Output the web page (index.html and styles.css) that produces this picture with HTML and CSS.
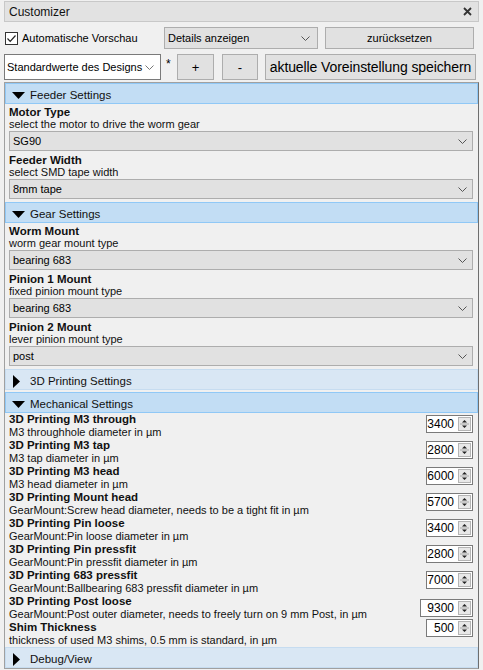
FILE: index.html
```html
<!DOCTYPE html>
<html>
<head>
<meta charset="utf-8">
<link rel="stylesheet" href="styles.css">
</head>
<body>
<div class="titlebar">
  <span class="title">Customizer</span>
  <svg class="close" width="9" height="9" viewBox="0 0 9 9"><path d="M1 1L8 8M8 1L1 8" stroke="#333" stroke-width="1.8"/></svg>
</div>

<div class="row1">
  <label class="chk">
    <span class="box"><svg width="11" height="11" viewBox="0 0 11 11"><path d="M1.5 5.5L4.2 8.3L9.5 2.5" fill="none" stroke="#222" stroke-width="1.2"/></svg></span>
    <span>Automatische Vorschau</span>
  </label>
  <div class="combo grey details"><span>Details anzeigen</span><svg class="chev" width="9" height="5" viewBox="0 0 9 5"><path d="M0.5 0.5L4.5 4.5L8.5 0.5" fill="none" stroke="#555"/></svg></div>
  <div class="btn reset">zurücksetzen</div>
</div>

<div class="row2">
  <div class="combo white preset"><span>Standardwerte des Designs</span><svg class="chev" width="9" height="5" viewBox="0 0 9 5"><path d="M0.5 0.5L4.5 4.5L8.5 0.5" fill="none" stroke="#777"/></svg></div>
  <span class="star">*</span>
  <div class="btn sq plus">+</div>
  <div class="btn sq minus">-</div>
  <div class="btn big">aktuelle Voreinstellung speichern</div>
</div>

<div class="panel">
  <div class="ghead open"><svg class="tri" width="13" height="7" viewBox="0 0 13 7"><path d="M0 0H13L6.5 7Z" fill="#000"/></svg><span>Feeder Settings</span></div>
  <div class="params">
    <div class="pt">Motor Type</div>
    <div class="pd">select the motor to drive the worm gear</div>
    <div class="sel"><span>SG90</span><svg class="chev" width="9" height="5" viewBox="0 0 9 5"><path d="M0.5 0.5L4.5 4.5L8.5 0.5" fill="none" stroke="#555"/></svg></div>
    <div class="pt">Feeder Width</div>
    <div class="pd">select SMD tape width</div>
    <div class="sel"><span>8mm tape</span><svg class="chev" width="9" height="5" viewBox="0 0 9 5"><path d="M0.5 0.5L4.5 4.5L8.5 0.5" fill="none" stroke="#555"/></svg></div>
  </div>

  <div class="ghead open"><svg class="tri" width="13" height="7" viewBox="0 0 13 7"><path d="M0 0H13L6.5 7Z" fill="#000"/></svg><span>Gear Settings</span></div>
  <div class="params">
    <div class="pt">Worm Mount</div>
    <div class="pd">worm gear mount type</div>
    <div class="sel"><span>bearing 683</span><svg class="chev" width="9" height="5" viewBox="0 0 9 5"><path d="M0.5 0.5L4.5 4.5L8.5 0.5" fill="none" stroke="#555"/></svg></div>
    <div class="pt">Pinion 1 Mount</div>
    <div class="pd">fixed pinion mount type</div>
    <div class="sel"><span>bearing 683</span><svg class="chev" width="9" height="5" viewBox="0 0 9 5"><path d="M0.5 0.5L4.5 4.5L8.5 0.5" fill="none" stroke="#555"/></svg></div>
    <div class="pt">Pinion 2 Mount</div>
    <div class="pd">lever pinion mount type</div>
    <div class="sel"><span>post</span><svg class="chev" width="9" height="5" viewBox="0 0 9 5"><path d="M0.5 0.5L4.5 4.5L8.5 0.5" fill="none" stroke="#555"/></svg></div>
  </div>

  <div class="ghead closed"><svg class="tri r" width="7" height="13" viewBox="0 0 7 13"><path d="M0 0V13L7 6.5Z" fill="#000"/></svg><span>3D Printing Settings</span></div>

  <div class="ghead open"><svg class="tri" width="13" height="7" viewBox="0 0 13 7"><path d="M0 0H13L6.5 7Z" fill="#000"/></svg><span>Mechanical Settings</span></div>
  <div class="params mech">
    <div class="item">
      <div class="itxt"><div class="pt">3D Printing M3 through</div><div class="pd">M3 throughhole diameter in µm</div></div>
      <div class="spin"><span class="val">3400</span><span class="arrows"><svg width="11" height="14" viewBox="0 0 11 14"><path d="M3 5.5H8L5.5 3Z" fill="#222"/><path d="M1 7H10" stroke="#a8a8a8"/><path d="M3 8.5H8L5.5 11Z" fill="#222"/></svg></span></div>
    </div>
    <div class="item">
      <div class="itxt"><div class="pt">3D Printing M3 tap</div><div class="pd">M3 tap diameter in µm</div></div>
      <div class="spin"><span class="val">2800</span><span class="arrows"><svg width="11" height="14" viewBox="0 0 11 14"><path d="M3 5.5H8L5.5 3Z" fill="#222"/><path d="M1 7H10" stroke="#a8a8a8"/><path d="M3 8.5H8L5.5 11Z" fill="#222"/></svg></span></div>
    </div>
    <div class="item">
      <div class="itxt"><div class="pt">3D Printing M3 head</div><div class="pd">M3 head diameter in µm</div></div>
      <div class="spin"><span class="val">6000</span><span class="arrows"><svg width="11" height="14" viewBox="0 0 11 14"><path d="M3 5.5H8L5.5 3Z" fill="#222"/><path d="M1 7H10" stroke="#a8a8a8"/><path d="M3 8.5H8L5.5 11Z" fill="#222"/></svg></span></div>
    </div>
    <div class="item">
      <div class="itxt"><div class="pt">3D Printing Mount head</div><div class="pd">GearMount:Screw head diameter, needs to be a tight fit in µm</div></div>
      <div class="spin"><span class="val">5700</span><span class="arrows"><svg width="11" height="14" viewBox="0 0 11 14"><path d="M3 5.5H8L5.5 3Z" fill="#222"/><path d="M1 7H10" stroke="#a8a8a8"/><path d="M3 8.5H8L5.5 11Z" fill="#222"/></svg></span></div>
    </div>
    <div class="item">
      <div class="itxt"><div class="pt">3D Printing Pin loose</div><div class="pd">GearMount:Pin loose diameter in µm</div></div>
      <div class="spin"><span class="val">3400</span><span class="arrows"><svg width="11" height="14" viewBox="0 0 11 14"><path d="M3 5.5H8L5.5 3Z" fill="#222"/><path d="M1 7H10" stroke="#a8a8a8"/><path d="M3 8.5H8L5.5 11Z" fill="#222"/></svg></span></div>
    </div>
    <div class="item">
      <div class="itxt"><div class="pt">3D Printing Pin pressfit</div><div class="pd">GearMount:Pin pressfit diameter in µm</div></div>
      <div class="spin"><span class="val">2800</span><span class="arrows"><svg width="11" height="14" viewBox="0 0 11 14"><path d="M3 5.5H8L5.5 3Z" fill="#222"/><path d="M1 7H10" stroke="#a8a8a8"/><path d="M3 8.5H8L5.5 11Z" fill="#222"/></svg></span></div>
    </div>
    <div class="item">
      <div class="itxt"><div class="pt">3D Printing 683 pressfit</div><div class="pd">GearMount:Ballbearing 683 pressfit diameter in µm</div></div>
      <div class="spin"><span class="val">7000</span><span class="arrows"><svg width="11" height="14" viewBox="0 0 11 14"><path d="M3 5.5H8L5.5 3Z" fill="#222"/><path d="M1 7H10" stroke="#a8a8a8"/><path d="M3 8.5H8L5.5 11Z" fill="#222"/></svg></span></div>
    </div>
    <div class="item">
      <div class="itxt"><div class="pt">3D Printing Post loose</div><div class="pd">GearMount:Post outer diameter, needs to freely turn on 9 mm Post, in µm</div></div>
      <div class="spin wide"><span class="val">9300</span><span class="arrows"><svg width="11" height="14" viewBox="0 0 11 14"><path d="M3 5.5H8L5.5 3Z" fill="#222"/><path d="M1 7H10" stroke="#a8a8a8"/><path d="M3 8.5H8L5.5 11Z" fill="#222"/></svg></span></div>
    </div>
    <div class="item">
      <div class="itxt"><div class="pt">Shim Thickness</div><div class="pd">thickness of used M3 shims, 0.5 mm is standard, in µm</div></div>
      <div class="spin low"><span class="val">500</span><span class="arrows"><svg width="11" height="14" viewBox="0 0 11 14"><path d="M3 5.5H8L5.5 3Z" fill="#222"/><path d="M1 7H10" stroke="#a8a8a8"/><path d="M3 8.5H8L5.5 11Z" fill="#222"/></svg></span></div>
    </div>
  </div>

  <div class="ghead closed"><svg class="tri r" width="7" height="13" viewBox="0 0 7 13"><path d="M0 0V13L7 6.5Z" fill="#000"/></svg><span>Debug/View</span></div>
</div>
</body>
</html>
```

FILE: styles.css
```css
* { box-sizing: border-box; }

body {
  margin: 0;
  width: 483px;
  height: 670px;
  overflow: hidden;
  background: #f0f0f0;
  font-family: "Liberation Sans", Arial, sans-serif;
  font-size: 11px;
  color: #000;
}

.titlebar {
  margin: 1px 4px 0 4px;
  height: 21px;
  border: 1px solid #c8c8c8;
  background: #e2e2e2;
  display: flex;
  align-items: center;
  justify-content: space-between;
  padding: 0 6px 0 4px;
  font-size: 12px;
  color: #111;
}

.row1 {
  display: flex;
  align-items: center;
  height: 22px;
  margin-top: 5px;
  padding-left: 5px;
}

.chk {
  display: flex;
  align-items: center;
  width: 159px;
  height: 22px;
}

.box {
  width: 13px;
  height: 13px;
  border: 1px solid #333;
  background: #fff;
  margin-right: 4px;
  display: flex;
  align-items: center;
  justify-content: center;
}

.combo {
  display: flex;
  align-items: center;
  justify-content: space-between;
  border: 1px solid #adadad;
  padding: 0 7px 0 3px;
}

.combo.grey {
  background: #e1e1e1;
}

.combo.white {
  background: #fff;
  border-color: #7a7a7a;
}

.details {
  width: 154px;
  height: 22px;
}

.btn {
  display: flex;
  align-items: center;
  justify-content: center;
  background: #e1e1e1;
  border: 1px solid #adadad;
  white-space: nowrap;
}

.reset {
  width: 149px;
  height: 22px;
  margin-left: 7px;
}

.row2 {
  display: flex;
  align-items: center;
  height: 26px;
  margin-top: 5px;
  padding-left: 4px;
}

.preset {
  width: 157px;
  height: 26px;
  padding: 0 6px 0 2px;
}

.star {
  width: 11px;
  margin-left: 5px;
  align-self: flex-start;
  padding-top: 3px;
  font-size: 12px;
}

.sq {
  height: 26px;
  font-size: 13px;
}

.plus {
  width: 37px;
}

.minus {
  width: 36px;
  margin-left: 8px;
}

.big {
  width: 211px;
  height: 26px;
  margin-left: 7px;
  font-size: 14px;
  letter-spacing: -0.1px;
  padding: 0;
}

.panel {
  margin: 2px 4px 0 4px;
  height: 587px;
  border: 1px solid #a0a0a0;
  border-right-color: #6e6e6e;
  display: flex;
  flex-direction: column;
}

.ghead {
  height: 21px;
  display: flex;
  align-items: center;
  border: 1px solid #90c8f6;
  padding: 3px 0 0 6px;
  font-size: 11.5px;
  color: #111;
}

.ghead.open {
  background: #c2ddf4;
}

.ghead.closed {
  background: #d9e7f4;
  border-color: #c6dcf0;
}

.ghead + .ghead {
  margin-top: 2px;
}

.tri {
  margin-right: 5px;
}

.tri.r {
  margin-left: 1px;
  margin-right: 10px;
}

.params {
  padding: 0 5px 2px 4px;
}

.pt {
  font-weight: bold;
  font-size: 11.5px;
  line-height: 14px;
  height: 14px;
  padding-top: 1px;
  color: #111;
}

.pd {
  line-height: 13px;
  height: 13px;
  color: #111;
}

.sel {
  height: 20px;
  margin-bottom: 1px;
  border: 1px solid #adadad;
  background: #e1e1e1;
  display: flex;
  align-items: center;
  justify-content: space-between;
  padding: 0 5px 0 3px;
}

.params.mech {
  padding-bottom: 0;
}

.item {
  display: flex;
  justify-content: space-between;
  align-items: flex-start;
  height: 26px;
}

.item .pt {
  height: 13px;
  line-height: 13px;
  padding-top: 0;
}

.spin {
  width: 47px;
  height: 18px;
  margin-top: 2px;
  border: 1px solid #7a7a7a;
  background: #fff;
  display: flex;
  align-items: center;
  justify-content: flex-end;
  padding: 1px;
  font-size: 12px;
}

.spin.wide {
  width: 53px;
  margin-top: 4px;
}

.spin.low {
  margin-top: -2px;
}

.val {
  padding-right: 4px;
}

.arrows {
  width: 13px;
  height: 14px;
  background: #e8e8e8;
  border: 1px solid #b4b4b4;
  display: flex;
  align-items: center;
  justify-content: center;
}

.arrows svg {
  display: block;
}
```
